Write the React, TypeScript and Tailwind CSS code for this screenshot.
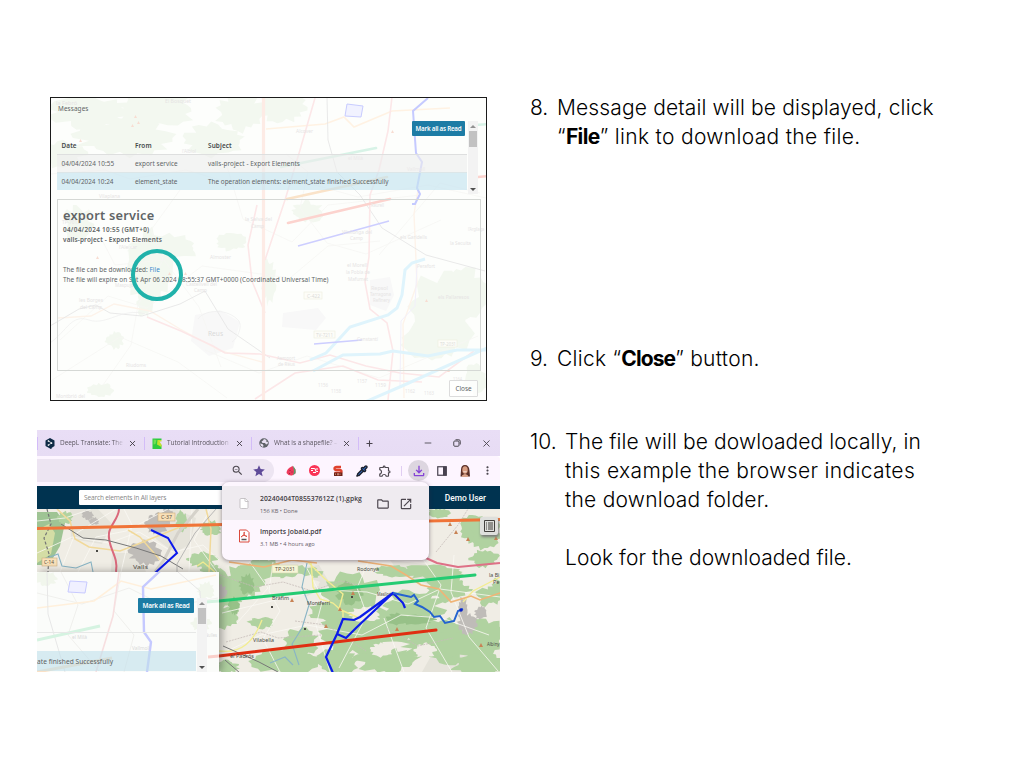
import React from 'react';
import { X, Plus, Minus, File as FileIcon, Pipette } from 'lucide-react';
import { MdOutlineExtension, MdOutlineFileDownload, MdOpenInNew, MdOutlineFolder, MdZoomOut, MdStar, MdMoreVert } from 'react-icons/md';

function blob(cx: number, cy: number, rx: number, ry: number, seed: number): string {
  let s = seed * 7919 + 13;
  const rnd = () => {
    s = (s * 16807) % 2147483647;
    return s / 2147483647;
  };
  rnd();
  const n = 30;
  const pts: string[] = [];
  for (let i = 0; i < n; i++) {
    const a = (i / n) * Math.PI * 2;
    const k = 0.66 + rnd() * 0.45;
    pts.push(`${(cx + Math.cos(a) * rx * k).toFixed(1)},${(cy + Math.sin(a) * ry * k).toFixed(1)}`);
  }
  return pts.join(' ');
}

type Patch = [number, number, number, number];

function Patches({ items, fill }: { items: Patch[]; fill: string }) {
  return (
    <g fill={fill}>
      {items.map(([x, y, rx, ry], i) => (
        <polygon key={i} points={blob(x, y, rx, ry, i + 3)} />
      ))}
    </g>
  );
}

type Label = [number, number, string, number];

function Labels({ items, fill, size }: { items: Label[]; fill: string; size: number }) {
  return (
    <g fill={fill} fontSize={size} fontFamily="Noto Sans, sans-serif">
      {items.map(([x, y, t, w], i) => (
        <text key={i} x={x} y={y} textLength={w} lengthAdjust="spacingAndGlyphs">{t}</text>
      ))}
    </g>
  );
}

function FadedMap() {
  return (
    <svg className="absolute inset-0 h-full w-full" viewBox="51 98 435 302" preserveAspectRatio="none" fill="none">
      <rect x="50" y="97" width="440" height="306" fill="#fdfefc" />
      <Patches fill="#f3f8f0" items={[[90, 112, 42, 18], [155, 108, 45, 20], [60, 155, 26, 14], [124, 138, 52, 19], [215, 140, 32, 17], [280, 107, 26, 16], [240, 112, 25, 20], [165, 248, 38, 14], [150, 268, 22, 42], [145, 304, 9, 14], [115, 340, 10, 9], [100, 390, 14, 7], [307, 212, 18, 11], [440, 315, 38, 45], [463, 292, 25, 28], [425, 345, 25, 18], [268, 280, 8, 24], [475, 380, 12, 16], [232, 242, 18, 9], [78, 224, 15, 18]]} />
      <g fill="#f8f8f8">
        <path d="M283 313l35-5 8 10-10 12-34-3zM370 280l20-3 4 18-8 16-16-6zM195 315l25-5 20 12-7 26-24 8-18-15z" />
      </g>
      <g stroke="#f6f6f4" strokeWidth="0.8">
        <path d="M50 174l55-4 25 9 56-9 48 14 70-2 54 15 70-12 58 13M60 340l48-44 39 12 55-42 88 12 38-32 52-5M102 240l13 25 49-5 35 47 22 60M180 190l-29 40 12 30-25 45-7 40-28 40M225 160l18 59 49 23 36-37 93-10M286 154l22 18-8 36 27 35 39 11 75-34M379 255l61-72 40 10M205 350l54 23 48-17 72 22 99-42M52 380l68-43 58 25 49 36" />
      </g>
      <path d="M266 129L325 124 344 117 354 127 392 111 450 108" stroke="#fff2e3" strokeWidth="1.6" />
      <path d="M418 190l-4 24 3 70-14 40 1 74M58 318L91 316 114 304 150 311 180 329 221 351 262 362" stroke="#fdf3ea" strokeWidth="1.4" />
      <path d="M50 326L79 309 96 305 110 313 142 316 180 304 205 291 228 329 270 358M327 97L328 140 337 172 360 195 382 228 426 255 485 271" stroke="#e6e6e6" strokeWidth="0.9" />
      <path d="M50 343C68 330 71 314 89 320S122 307 145 314M198 319c5-8 26-12 39 0 7 5 1 19-5 23" stroke="#eeeeee" strokeWidth="0.7" />
      <path d="M392 97L388 131 379 170 370 195 369 257 365 282 370 309 387 323 393 351 388 400M147 317L181 331 213 346 225 353 260 354 300 363 330 355 366 366 400 373 439 377 474 351M257 205l-9 40 4 36 13 32M255 399l40-26 48-7 35 14 44 2M265 260l20-60 15-50 15-52" stroke="#fce7e8" strokeWidth="1.6" />
      <path d="M263.5 97V400" stroke="#fdebe5" strokeWidth="3.2" />
      <path d="M417 265L415 306 401 321 400 386" stroke="#f2f0fb" />
      <path d="M425 259L412 263 405 270 402 295 397 308 388 315 350 327 340 338 326 353 310 360M313 371L343 355 380 354 393 351 428 356 457 350 487 350M365 402L402 386 487 348" stroke="#dff4fc" strokeWidth="3" />
      <g strokeLinecap="round" strokeWidth="2.6">
        <path d="M281 167L376 148M475 125l14-1" stroke="#d8f3e7" />
        <path d="M287 199L387 177" stroke="#fae3c9" />
        <path d="M288 223L390 199M478 177l10-1" stroke="#fcd3ce" />
      </g>
      <path d="M298 246L389 221M314 344L362 340" stroke="#cdceff" strokeWidth="1.6" />
      <path d="M428 98L413 111 416 153 422 162 417 188 420 194 415 204 412 204" stroke="#c5caff" strokeWidth="2" />
      <path d="M347 104L363 106 361 117 345 116Z" fill="#f1f2ff" stroke="#c8ccff" />
      <g fill="#f8ddd2">
        {[[131, 127], [137, 124], [134, 118], [79, 142], [168, 275], [184, 275], [425, 302], [447, 372], [391, 133], [96, 259]].map(([x, y], i) => (
          <path key={i} d={`M${x} ${y}l3 0-1.5-3z`} />
        ))}
      </g>
      <Labels fill="#e6e4e4" size={6} items={[[56, 105, 'la Febró', 21], [165, 103, 'El Bosquet', 26], [182, 153, "l'Albiol", 14], [99, 198, 'Vilaplana', 21], [62, 224, 'TP-7013', 18], [119, 249, "l'Aleixar", 18], [210, 259, 'Almoster', 21], [186, 286, 'Castellvell del', 31], [194, 292, 'Camp', 13], [79, 302, 'les Borges', 24], [80, 309, 'del Camp', 22], [115, 287, 'Maspujols', 22], [126, 367, 'Riudoms', 20], [56, 398, 'Montbrió del', 29], [296, 133, 'Alcover', 17], [348, 160, 'el Milà', 15], [407, 171, 'Vallmoll', 18], [371, 207, 'Raurell', 13], [342, 234, 'Vilallonga del', 30], [350, 240, 'Camp', 13], [400, 239, 'els Garidells', 27], [450, 245, 'la Secuita', 21], [468, 231, "l'Argilaga", 16], [347, 267, 'el Morell', 20], [346, 274, 'la Pobla de', 24], [348, 281, 'Mafumet', 20], [371, 290, 'Repsol', 17], [370, 296, 'Tarragona', 21], [373, 302, 'Refinery', 17], [417, 268, 'Perafort', 18], [438, 299, 'els Pallaresos', 31], [357, 341, 'Constantí', 21], [277, 360, 'Aeroport', 18], [278, 366, 'de Reus', 17], [318, 387, '1156', 10], [331, 393, '1158', 10], [357, 383, '1157', 10], [375, 387, '1159', 11], [405, 393, '1162', 10], [424, 395, '1163', 10], [453, 381, '1164', 9], [68, 0, '', 0]].filter((l) => l[2] !== '') as Label[]} />
      <Labels fill="#e6e4e4" size={6} items={[[245, 221, 'la Selva del', 27], [251, 228, 'Camp', 13]]} />
      <g stroke="#eeeedd" fill="#fdfdf8" strokeWidth="0.6">
        <rect x="304" y="292" width="18" height="7" /><rect x="314" y="331" width="21" height="7" /><rect x="438" y="340" width="19" height="7" />
      </g>
      <Labels fill="#dcdcd9" size={6} items={[[307, 298, 'C-422', 13], [316, 337, 'TV-7211', 17], [440, 346, 'TP-2031', 16]]} />
      <text x="208" y="336" fill="#dadada" fontSize="6.6" fontFamily="Noto Sans, sans-serif">Reus</text>
    </svg>
  );
}

function Scrollbar({ tall }: { tall: string }) {
  return (
    <div className={'flex w-[10px] flex-col items-center justify-between bg-[#f3f3f3] ' + tall}>
      <div className="flex w-full flex-col items-center">
        <svg className="my-[3px] h-[4px] w-[6px]" viewBox="0 0 6 4"><path d="M0 4L3 1 6 4Z" fill="#929292" /></svg>
        <div className="h-[16px] w-[8px] bg-[#c2c2c2]" />
      </div>
      <svg className="mb-[2px] h-[4px] w-[6px]" viewBox="0 0 6 4"><path d="M0 0L3 3 6 0Z" fill="#505050" /></svg>
    </div>
  );
}

function MessageRow({ date, from, subject, tone }: { date: string; from: string; subject: string; tone: string }) {
  return (
    <div className={'grid grid-cols-[73.5px_73px_auto] items-center pl-[4.5px] whitespace-nowrap ' + tone}>
      <span>{date}</span><span>{from}</span><span>{subject}</span>
    </div>
  );
}

function MessagesPanel() {
  return (
    <section className="relative h-[304px] w-[437px] border border-[#1b1b1b] font-['Noto_Sans',sans-serif] text-[6.4px] text-[#606466]">
      <FadedMap />
      <div className="relative flex h-full flex-col">
        <h2 className="mt-[6px] ml-[7px] h-[17px] leading-[9px] tracking-[0.1px]">Messages</h2>
        <div className="ml-[6px] flex h-[73px]">
          <div className="w-[410px]">
            <div className="flex h-[14px] justify-end pr-[2px]">
              <button className="h-[15px] w-[53px] rounded-[1px] bg-[#1d7ca5] text-[6.2px] leading-[14px] font-semibold tracking-[-0.22px] whitespace-nowrap text-white">Mark all as Read</button>
            </div>
            <MessageRow date="Date" from="From" subject="Subject" tone="h-[19px] pt-[2px] font-semibold tracking-[0.12px] text-[#45494b]" />
            <MessageRow date="04/04/2024 10:55" from="export service" subject="valls-project - Export Elements" tone="h-[18px] border-t border-[#dedfdf] bg-[#ededed]/60 tracking-[0.04px]" />
            <MessageRow date="04/04/2024 10:24" from="element_state" subject="The operation elements: element_state finished Successfully" tone="h-[18px] border-t border-[#dce6e8] bg-[#c4e4ef]/65" />
          </div>
          <div className="pl-[1px]"><Scrollbar tall="h-[73px]" /></div>
        </div>
        <div className="mt-[5px] ml-[6px] h-[172px] w-[424px] border border-[#d5d8d5] pl-[5px]">
          <h3 className="mt-[6px] h-[18px] text-[12.8px] leading-[18px] font-semibold tracking-[0.22px]">export service</h3>
          <p className="h-[10px] leading-[11px] font-semibold tracking-[0.28px]">04/04/2024 10:55 (GMT+0)</p>
          <p className="h-[30px] leading-[11px] font-semibold tracking-[0.15px]">valls-project - Export Elements</p>
          <p className="h-[10px] leading-[11px] tracking-[0.03px]">The file can be downloaded: <a className="text-[#3888cc]">File</a></p>
          <p className="leading-[11px] tracking-[0.045px]">The file will expire on Sat Apr 06 2024 08:55:37 GMT+0000 (Coordinated Universal Time)</p>
        </div>
        <button className="mt-[9px] ml-[398px] h-[17px] w-[29px] rounded-[1px] border border-[#dcdcdc] bg-white/70 text-[6.4px]">Close</button>
      </div>
      <div className="absolute top-[151px] left-[80px] h-[52px] w-[52px] rounded-full border-4 border-[#20b2aa]" />
    </section>
  );
}

function StreetMap() {
  return (
    <svg className="absolute inset-0 h-full w-full" viewBox="37 509 463 163" preserveAspectRatio="none" fill="none">
      <rect x="37" y="509" width="463" height="163" fill="#f0ede5" />
      <g fill="#e5e3da">
        <path d="M70 509h28l14 15-10 20-31-5zM112 553h28l6 19h-35zM160 514l15-5 21 9-6 26-15 9-19-14zM390 560l35 4 30 14-15 11-40-15zM440 640l30 8 12 24h-60zM284 570l35-5 12 20-26 12z" />
      </g>
      <path d="M37 512h20l8 11-5 23-11 19H37Z" fill="#9fc494" />
      <path d="M37 530l12-6 6 9-4 21-14 9Z" fill="#d4dda5" />
      <Patches fill="#b0d2a0" items={[[182, 521, 6, 11], [211, 528, 12, 8], [202, 560, 15, 8], [211, 571, 11, 7], [223, 590, 23, 20], [244, 581, 20, 18], [223, 617, 17, 12], [262, 570, 25, 12], [300, 573, 22, 8], [350, 595, 30, 23], [335, 611, 33, 13], [386, 625, 61, 17], [350, 635, 37, 22], [300, 642, 20, 15], [285, 661, 35, 14], [337, 662, 22, 14], [412, 606, 33, 18], [430, 572, 34, 7], [474, 529, 16, 14], [486, 535, 17, 15], [484, 558, 15, 10], [490, 592, 15, 15], [448, 588, 24, 14], [447, 640, 25, 24], [484, 638, 22, 22], [480, 665, 32, 12], [387, 660, 32, 14], [227, 667, 12, 7], [439, 513, 12, 5], [261, 623, 14, 6], [394, 571, 19, 7], [440, 644, 45, 16], [65, 518, 8, 7]]} />
      <Patches fill="#97c188" items={[[350, 593, 14, 12], [247, 584, 9, 11], [413, 620, 22, 5], [234, 606, 6, 9], [398, 619, 12, 6]]} />
      <Patches fill="#f0ede5" items={[[297, 610, 16, 18], [365, 614, 18, 8], [425, 651, 11, 8], [300, 584, 20, 10], [382, 650, 12, 7], [478, 581, 18, 9]]} />
      <Patches fill="#bfbcb8" items={[[88, 515, 6, 5], [94, 521, 6, 4], [157, 524, 12, 11], [145, 553, 17, 13], [168, 515, 7, 7], [467, 624, 10, 11], [463, 610, 5, 14], [481, 613, 7, 7], [221, 592, 6, 8]]} />
      <path d="M37 521l28-3 26-9M37 553l35-16 37 6 30-11 34 20 30-7 16 15M60 572l15-38 41-25M78 572l18-35 30-6 42-22M121 572l11-47-8-16M189 572l3-63M210 509l-16 31 23 32M222 613l62-15 43-8 40 2 41 12 32-15 60 8M225 652l36-17 46-10 55 10 39-20 41 3 47 17M302 559l21 40-7 26 14 47M273 562l-4 29 11 20-17 28 17 33M369 560l-12 28 10 27-28 53M384 618l20 54M420 555l21 30-15 43 26 44M454 555l-3 37 18 45 29 34M249 561l19 27-31 35" stroke="#faf9f4" strokeWidth="0.8" />
      <path d="M220 575l35 12 28-5 29 9 29-10 29 7M295 621l31 4 40 26M226 642l35-10 17 6 43-3M386 628l32 18 35-8M436 552l22-27 10-16" stroke="#c6bcb9" strokeWidth="0.8" strokeDasharray="2 1" />
      <path d="M57 509L70 521 75 539 89 547 120 551 138 544 180 527 209 525M160 560l-20-23-12-7M206 509l5 20-2 44" stroke="#f1d99a" strokeWidth="1.5" />
      <path d="M198 509L178 533 164 560 155 572" stroke="#d5d2ca" strokeWidth="3" />
      <path d="M308 562l16 16 19 16-4 15 20 9M219 651c23 3 35-10 43-31M311 562l2 25 7 12 13 4 10 9v10M463 602l10-11 27-14M215 572l-12-10-6 4" stroke="#f3ed92" strokeWidth="1.4" />
      <path d="M358 561L391 566 406 575 421 585 439 589 451 602 471 596 480 600 500 593M229 562l35 5 28-7 25 3" stroke="#f0b476" strokeWidth="1.6" />
      <path d="M426 558L437 563 458 567 500 563" stroke="#de7187" strokeWidth="2.2" />
      <path d="M119 509c0 9-9 16-10 24-2 14 10 23 7 39" stroke="#da687b" strokeWidth="2" />
      <path d="M47 509L51 524 44 538 49 554 48 572" stroke="#757575" strokeWidth="1.2" strokeDasharray="3 2" />
      <path d="M61 524L83 538 106 540 136 548 161 556 183 569M223 646l36 16 19 10M240 673l-15-13" stroke="#777" strokeWidth="1" />
      <path d="M307 563l-5 24 7 18-7 23-10 16 7 21M42 560l16-6 4 12 14 2 15-6 2 10M270 663l15-6 8 8" stroke="#88b4c5" strokeWidth="1.1" />
      <path d="M177 572v-8l18-31 21-24" stroke="#aaa" strokeWidth="0.8" />
      <path d="M37 528.5L224 524.5M428 521L500 519.5" stroke="#f07438" strokeWidth="3" />
      <path d="M219 601L475 575" stroke="#24cb72" strokeWidth="3" strokeLinecap="round" />
      <path d="M219 656L436 630" stroke="#e02e12" strokeWidth="3" strokeLinecap="round" />
      <path d="M151 530L168 538 177 553 155 573" stroke="#0b18ed" strokeWidth="2" />
      <g fill="#c88355">
        {[[290, 602], [351, 595], [338, 611], [324, 628], [448, 526], [454, 534], [466, 541], [395, 631], [479, 647], [494, 540]].map(([x, y], i) => <path key={i} d={`M${x} ${y}l4 0-2-4z`} />)}
      </g>
      <g fill="#494944"><rect x="96" y="550" width="2" height="2" /><rect x="351" y="596" width="2" height="2" /><rect x="304" y="628" width="2" height="2" /><rect x="271" y="606" width="2" height="2" /></g>
      <Labels fill="#494944" size={6} items={[[133, 569, 'Valls', 15], [357, 571, 'Rodonyà', 22], [307, 605, 'Montferri', 23], [272, 600, 'Bràfim', 17], [377, 596, 'Masllorenç', 20], [253, 642, 'Vilabella', 21], [230, 658, 'el Padrós', 24], [487, 646, 'Albiny', 12.5], [489, 577, 'la Bi', 10.5], [493, 584, 'Pe', 6.5]]} />
      <g strokeWidth="0.6"><rect x="158" y="513" width="17" height="8" fill="#f8e0b8" stroke="#cbb080" /><rect x="42" y="558" width="15" height="8" fill="#f8e0b8" stroke="#cbb080" /><rect x="272" y="565" width="26" height="8" fill="#f6f5d6" stroke="#d6d5ae" /></g>
      <Labels fill="#5c5240" size={6} items={[[161, 519, 'C-37', 11], [44, 564, 'C-14', 10], [275, 571, 'TP-2031', 20]]} />
      <path d="M333 673L326 657 337 634 346 638 356 628 393 593 403 603 405 608M337 634L343 619 354 620 360 617 393 593" stroke="#0b1ce9" strokeWidth="2.2" />
      <path d="M393 593L402 595 411 597 414 595 418 601 415 604 422 607 430 612 434 617 440 616 445 623 454 621 458 611 463 609" stroke="#2463cf" strokeWidth="2" />
      <circle cx="461" cy="610" r="1.7" fill="#0720ca" />
    </svg>
  );
}

function DialogCorner() {
  return (
    <div className="relative mt-[63px] flex h-[100px] w-[182px] flex-col overflow-hidden shadow-[3px_0_8px_rgba(60,60,60,0.45)]">
      <svg className="absolute inset-0 h-full w-full" viewBox="37 572 182 100" fill="none">
        <rect x="37" y="572" width="182" height="100" fill="#fbfcfa" />
        <Patches fill="#f1f6ec" items={[[46, 578, 12, 8], [206, 590, 10, 9], [201, 624, 10, 8]]} />
        <path d="M37 593l45 11 47-16 38 19 51-9M61 572l17 33-10 30 31 36M121 572l-7 39 20 24-10 37" stroke="#f0f0ed" />
        <path d="M37 608l57-7 27-20 30 8 65-14" stroke="#fff0dc" strokeWidth="1.6" />
        <path d="M47 572l1 42 17 58M178 572l22 19 5 81" stroke="#e7e7e7" />
        <path d="M119 572l-6 44-17 56" stroke="#f7dfe0" strokeWidth="1.6" />
        <path d="M37 640l63-14M205 602l14-1" stroke="#d5f3e1" strokeWidth="3" />
        <path d="M208 657l11-1" stroke="#fad0ca" strokeWidth="3" />
        <path d="M37 672l75-14" stroke="#fae1c6" strokeWidth="3" />
        <path d="M70 581L87 582 85 593 68 592Z" fill="#f0f0ff" stroke="#c8caff" />
        <path d="M160 571L143 587 144 632 151 642 147 672" stroke="#c5c9ff" strokeWidth="2.4" />
        <Labels fill="#d9d9d9" size={6} items={[[72, 639, 'el Milà', 15], [132, 650, 'Vallmoll', 18], [205, 637, 'Nulles', 12]]} />
      </svg>
      <div className="relative mt-[26px] ml-[101px] flex h-[74px]">
        <button className="h-[15px] w-[56px] rounded-[1px] bg-[#1c7ca4] font-['Noto_Sans',sans-serif] text-[6.4px] leading-[14px] font-semibold tracking-[-0.25px] whitespace-nowrap text-white">Mark all as Read</button>
        <div className="ml-[3px]"><Scrollbar tall="h-[74px]" /></div>
      </div>
      <div className="absolute top-[60px] left-0 h-px w-[159px] bg-[#e7e8e7]" />
      <div className="absolute top-[79px] left-0 h-[20px] w-[159px] bg-[#bfe0eb]/60 pt-px font-['Noto_Sans',sans-serif] text-[6.6px] leading-[19px] tracking-[0.04px] whitespace-nowrap text-[#5c6062]">ate finished Successfully</div>
    </div>
  );
}

function Tab({ icon, title, cls }: { icon: React.ReactNode; title: string; cls: string }) {
  return (
    <div className={'flex h-[13px] items-center border-l border-[#d3bcf8] pl-[7px] text-[#5b5660] ' + cls}>
      <span className="w-[15px]">{icon}</span>
      <span className="w-[64px] overflow-hidden text-[6.5px] leading-[10px] tracking-[-0.05px] whitespace-nowrap [mask-image:linear-gradient(90deg,#000_83%,transparent)]">{title}</span>
      <X className="ml-[4px] h-[9px] w-[9px] text-[#3c3840]" strokeWidth={2.3} />
    </div>
  );
}

function TabStrip() {
  return (
    <div className="flex h-[26px] items-center bg-gradient-to-b from-[#e9def6] to-[#e7dcf4] font-['Open_Sans',sans-serif]">
      <Tab cls="w-[107px]" title="DeepL Translate: The w" icon={<svg className="h-[11px] w-[10px]" viewBox="0 0 20 22"><path d="M10 0l9 5v11l-6 4v3l-3-2-9-5V5z" fill="#0f2b46" /><path d="M7 6l6 4-6 4M13 10v2" stroke="#fff" strokeWidth="1.4" fill="none" /><circle cx="7" cy="6" r="1.7" fill="#fff" /><circle cx="13" cy="10" r="1.7" fill="#fff" /><circle cx="7" cy="14" r="1.7" fill="#fff" /></svg>} />
      <Tab cls="w-[107px]" title="Tutorial Introduction |" icon={<svg className="h-[11px] w-[10px]" viewBox="0 0 20 22"><path d="M1 1h18v3h-5l-1 7 6 3v8H1z" fill="#2fcb3f" /><path d="M11 4h8v3h-4l4 6v5l-9-5z" fill="#c2df2f" /><path d="M3 3l6 1-2 8-4 1z" fill="#6fe052" /></svg>} />
      <Tab cls="w-[107px]" title="What is a shapefile? –" icon={<svg className="h-[10px] w-[10px]" viewBox="0 0 20 20"><circle cx="10" cy="10" r="9.5" fill="#5f6368" /><path d="M2 11l5 1 2 3-1 3Q3 16 2 11zM10 2l-2 3-3 2 2 3h5l2 3 3-1 1-4-4-1 1-3z" fill="#e7dff0" /></svg>} />
      <div className="flex h-[13px] items-center border-l border-[#d3bcf8] pl-[6px] text-[#49434d]"><Plus className="h-[9px] w-[9px]" strokeWidth={2.8} /></div>
      <div className="ml-auto flex items-center gap-[20px] pr-[8px] text-[#454149]">
        <Minus className="h-[10px] w-[10px]" strokeWidth={2} />
        <svg className="h-[8px] w-[8px]" viewBox="0 0 16 16" fill="none" stroke="currentColor" strokeWidth="1.9"><rect x="1.5" y="4" width="10.5" height="10.5" rx="2" /><path d="M5 1.5h6.500q3 0 3 3V11" /></svg>
        <X className="h-[11px] w-[11px]" strokeWidth={1.9} />
      </div>
    </div>
  );
}

function Toolbar() {
  return (
    <div className="flex h-[30px] items-center rounded-tr-[4px] bg-[#fdf5ff] text-[#4d4850]">
      <div className="-mt-px flex h-[23px] w-[237px] items-center justify-end gap-[8px] rounded-r-full bg-[#ede5f2] pr-[8px]">
        <MdZoomOut className="h-[13px] w-[13px]" /><MdStar className="h-[14px] w-[14px] text-[#5f4b99]" />
      </div>
      <div className="-mt-px ml-[12px] flex flex-1 items-center">
        <svg className="h-[11px] w-[10px]" viewBox="0 0 20 22"><path d="M13 2Q1 7 1 16q4 6 11 5l7-4V9z" fill="#ee3a5c" /><path d="M13 1q7 5 6 15l-5 5q4-10-1-20z" fill="#54a36c" /><path d="M8 10v2M12 13v2M7 16v2" stroke="#7a2338" strokeWidth="1.6" /></svg>
        <svg className="ml-[13px] h-[11px] w-[11px]" viewBox="0 0 22 22"><circle cx="11" cy="11" r="11" fill="#fa3457" /><path d="M4 7h6q3 0 3 3t3 3h2M4 11h4M14 8h4M8 15h6" stroke="#fff" strokeWidth="2.2" fill="none" /></svg>
        <svg className="ml-[13px] h-[12px] w-[10px]" viewBox="0 0 20 24"><path d="M16 4H7q-4 0-4 3t4 3h6q4 0 4 3t-4 3H3" stroke="#e0422e" strokeWidth="4.600" fill="none" /><path d="M2 15h17v7H2z" fill="#6f2418" /><path d="M5 17v3M9 17v3h2v-3zM14 17v3" stroke="#e8a08e" strokeWidth="1.300" fill="none" /></svg>
        <Pipette className="ml-[13px] h-[12px] w-[12px] text-[#1c202c]" fill="#3672d1" strokeWidth={2.800} />
        <MdOutlineExtension className="ml-[10px] h-[14px] w-[14px]" />
        <div className="ml-[9px] h-[10px] w-px bg-[#e0cdf2]" />
        <div className="ml-[6px] flex h-[21px] w-[21px] items-center justify-center rounded-full bg-[#ddd6e0]"><MdOutlineFileDownload className="h-[16px] w-[16px] text-[#8544d6]" /></div>
        <svg className="ml-[8px] h-[10px] w-[10px]" viewBox="0 0 20 20"><rect x="1.500" y="1.500" width="17" height="17" fill="none" stroke="#47414f" strokeWidth="2.400" /><path d="M12 1h7v18h-7z" fill="#47414f" /></svg>
        <svg className="ml-[13px] h-[12px] w-[10px]" viewBox="0 0 20 24"><path d="M2 10Q2 0 10 0t9 11l1 12H1z" fill="#5b3028" /><ellipse cx="10" cy="10" rx="5.5" ry="7.5" fill="#d99e83" /><path d="M4 21q6-6 12 0v3H4z" fill="#d8a28a" /><path d="M7 13q3 2 6 0" stroke="#fff" strokeWidth="1.5" fill="none" /></svg>
        <MdMoreVert className="ml-[11px] h-[13px] w-[13px]" />
      </div>
    </div>
  );
}

function DownloadItem({ name, meta, cls, children }: { name: string; meta: string; cls: string; children: React.ReactNode }) {
  return (
    <div className={'flex items-center pl-[16px] ' + cls}>
      {children}
      <div className="ml-[10px] w-[116px] whitespace-nowrap text-[#413b43]">
        <div className="text-[6.8px] leading-[11px] font-semibold tracking-[0.02px]">{name}</div>
        <div className="mt-[2px] text-[5.7px] leading-[10px] text-[#67616a]">{meta}</div>
      </div>
      {name.endsWith('gpkg') && <><MdOutlineFolder className="h-[14px] w-[14px] text-[#4c464e]" /><MdOpenInNew className="ml-[9px] h-[14px] w-[14px] text-[#4c464e]" /></>}
    </div>
  );
}

function BrowserPanel() {
  return (
    <section className="relative flex h-[242px] w-[463px] flex-col overflow-hidden">
      <TabStrip />
      <Toolbar />
      <div className="flex h-[23px] items-center bg-[#003350] text-white">
        <div className="ml-[42px] flex h-[15px] w-[151px] items-center rounded-[1px] bg-white pl-[5px] font-['Open_Sans',sans-serif] text-[6.6px] tracking-[-0.18px] text-[#858585]">Search elements in All layers</div>
        <span className="mt-px mr-[14px] ml-auto font-['Roboto',sans-serif] text-[8.4px] font-medium">Demo User</span>
      </div>
      <div className="relative h-[163px]"><StreetMap /><DialogCorner />
        <div className="absolute top-[8px] left-[443px] flex h-[18px] w-[18px] items-center justify-center rounded-[2px] bg-[#dedfdc] shadow-[1px_2px_3px_#777]"><svg className="h-[12px] w-[11px]" viewBox="0 0 22 24"><path d="M1 1h20v22H1zM4 6h2m2 0h10M4 10h2m2 0h10M4 14h2m2 0h10M4 18h2m2 0h10" fill="none" stroke="#42403d" strokeWidth="2" /></svg></div>
      </div>
      <div className="absolute top-[52px] left-[185px] h-[78px] w-[207px] rounded-[7px] bg-[#fdf6fe] pt-[4px] font-['Open_Sans',sans-serif] shadow-[0_1px_4px_rgba(50,35,60,0.5)]">
        <DownloadItem name="20240404T085537612Z (1).gpkg" meta="156 KB • Done" cls="h-[34px] bg-[#efebf0] pt-[2px]"><FileIcon className="mb-[2px] h-[15px] w-[12px] text-[#bebbbe]" strokeWidth={1.7} fill="#fff" /></DownloadItem>
        <DownloadItem name="Imports Jobaid.pdf" meta="3.1 MB • 4 hours ago" cls="h-[34px] pt-px"><svg className="mb-[4px] h-[14px] w-[12px]" viewBox="0 0 24 28"><path d="M3 2h14l5 5v19H3z" fill="#fff" stroke="#da493c" strokeWidth="2" /><path d="M12 6c3 0-1 8-6 10 3-4 9-4 12-1-4 0-7-4-6-9z" fill="none" stroke="#da493c" strokeWidth="1.8" /><path d="M7 21h10" stroke="#555" strokeWidth="3" /></svg></DownloadItem>
      </div>
    </section>
  );
}

export default function App() {
  return (
    <main className="flex h-[768px] w-[1024px] overflow-hidden bg-white">
      <div className="flex w-[530px] flex-col pt-[97px] pl-[37px]">
        <div className="pl-[13px]"><MessagesPanel /></div>
        <div className="mt-[29px]"><BrowserPanel /></div>
      </div>
      <div className="pt-[93px] font-['Inter',sans-serif] text-[21px] leading-[29px] font-light whitespace-nowrap text-black">
        <div className="flex h-[251px]"><span className="w-[27px]">8.</span><p><span className="tracking-[0.14px]">Message detail will be displayed, click</span><br /><span className="tracking-[0.32px]">“<span className="font-bold tracking-[-0.6px]">File</span>” link to download the file.</span></p></div>
        <div className="flex h-[83px]"><span className="w-[27px]">9.</span><p className="tracking-[0.27px]">Click “<span className="font-bold tracking-[-0.9px]">Close</span>” button.</p></div>
        <div className="flex"><span className="w-[35px]">10.</span><div><p><span className="tracking-[0.1px]">The file will be dowloaded locally, in</span><br /><span className="tracking-[0.35px]">this example the browser indicates</span><br /><span className="tracking-[0.24px]">the download folder.</span></p><p className="mt-[29px] tracking-[0.07px]">Look for the downloaded file.</p></div></div>
      </div>
    </main>
  );
}
